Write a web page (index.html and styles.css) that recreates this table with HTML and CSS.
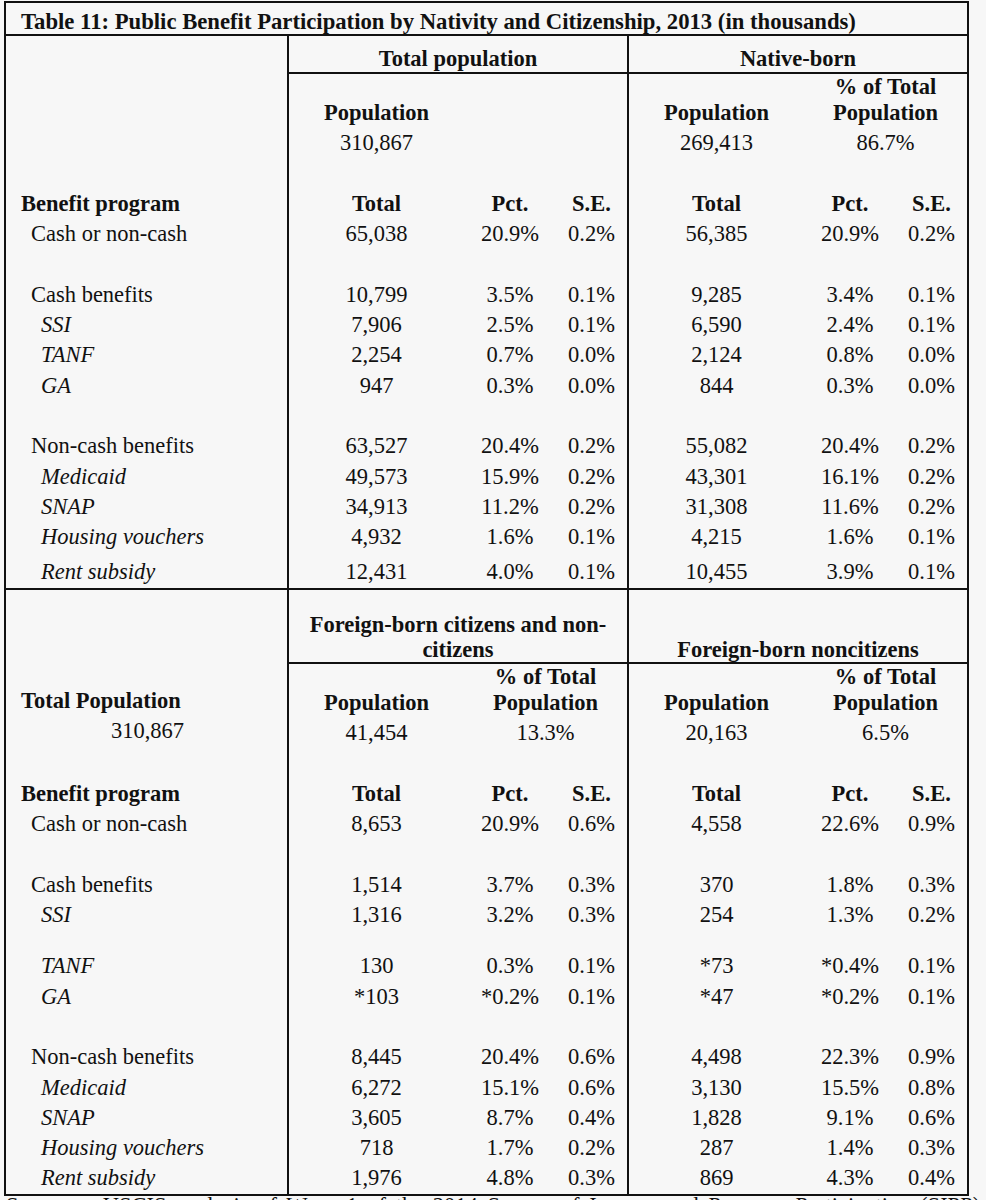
FILE: index.html
```html
<!DOCTYPE html>
<html lang="en">
<head>
<meta charset="utf-8">
<title>Table 11: Public Benefit Participation</title>
<link rel="stylesheet" href="styles.css">
</head>
<body>
<div class="page">
<table class="tbl">
<colgroup>
<col class="c-label"><col class="c-total"><col class="c-pct"><col class="c-se"><col class="c-total"><col class="c-pct"><col class="c-se">
</colgroup>
<tbody>
<tr><td colspan="7" class="title">Table 11: Public Benefit Participation by Nativity and Citizenship, 2013 (in thousands)</td></tr>

<tr>
  <td class="label-head" rowspan="2"></td>
  <td colspan="3" class="group d">Total population</td>
  <td colspan="3" class="group d">Native-born</td>
</tr>
<tr>
  <td class="pop d"><div class="hl">&nbsp;</div><div class="hl">Population</div><div class="vl">310,867</div></td>
  <td colspan="2" class="pop"></td>
  <td class="pop d"><div class="hl">&nbsp;</div><div class="hl">Population</div><div class="vl">269,413</div></td>
  <td colspan="2" class="pop"><div class="hl">% of Total</div><div class="hl">Population</div><div class="vl">86.7%</div></td>
</tr>

<tr class="hdr"><td class="l0">Benefit program</td><td class="d">Total</td><td>Pct.</td><td>S.E.</td><td class="d">Total</td><td>Pct.</td><td>S.E.</td></tr>
<tr><td class="l1">Cash or non-cash</td><td class="d">65,038</td><td>20.9%</td><td>0.2%</td><td class="d">56,385</td><td>20.9%</td><td>0.2%</td></tr>
<tr><td class="l1">&nbsp;</td><td class="d"></td><td></td><td></td><td class="d"></td><td></td><td></td></tr>
<tr><td class="l1">Cash benefits</td><td class="d">10,799</td><td>3.5%</td><td>0.1%</td><td class="d">9,285</td><td>3.4%</td><td>0.1%</td></tr>
<tr><td class="l2">SSI</td><td class="d">7,906</td><td>2.5%</td><td>0.1%</td><td class="d">6,590</td><td>2.4%</td><td>0.1%</td></tr>
<tr><td class="l2">TANF</td><td class="d">2,254</td><td>0.7%</td><td>0.0%</td><td class="d">2,124</td><td>0.8%</td><td>0.0%</td></tr>
<tr><td class="l2">GA</td><td class="d">947</td><td>0.3%</td><td>0.0%</td><td class="d">844</td><td>0.3%</td><td>0.0%</td></tr>
<tr><td class="l1">&nbsp;</td><td class="d"></td><td></td><td></td><td class="d"></td><td></td><td></td></tr>
<tr><td class="l1">Non-cash benefits</td><td class="d">63,527</td><td>20.4%</td><td>0.2%</td><td class="d">55,082</td><td>20.4%</td><td>0.2%</td></tr>
<tr><td class="l2">Medicaid</td><td class="d">49,573</td><td>15.9%</td><td>0.2%</td><td class="d">43,301</td><td>16.1%</td><td>0.2%</td></tr>
<tr><td class="l2">SNAP</td><td class="d">34,913</td><td>11.2%</td><td>0.2%</td><td class="d">31,308</td><td>11.6%</td><td>0.2%</td></tr>
<tr><td class="l2">Housing vouchers</td><td class="d">4,932</td><td>1.6%</td><td>0.1%</td><td class="d">4,215</td><td>1.6%</td><td>0.1%</td></tr>
<tr class="last-top"><td class="l2">Rent subsidy</td><td class="d">12,431</td><td>4.0%</td><td>0.1%</td><td class="d">10,455</td><td>3.9%</td><td>0.1%</td></tr>

<tr class="sec">
  <td class="label-head2" rowspan="2"><div class="hl">&nbsp;</div><div class="hl">Total Population</div><div class="vl tp"><span class="tp-box">310,867</span></div></td>
  <td colspan="3" class="group2 d">Foreign-born citizens and non-<br>citizens</td>
  <td colspan="3" class="group2 d">Foreign-born noncitizens</td>
</tr>
<tr>
  <td class="pop2 d"><div class="hl">&nbsp;</div><div class="hl">Population</div><div class="vl">41,454</div></td>
  <td colspan="2" class="pop2"><div class="hl">% of Total</div><div class="hl">Population</div><div class="vl">13.3%</div></td>
  <td class="pop2 d"><div class="hl">&nbsp;</div><div class="hl">Population</div><div class="vl">20,163</div></td>
  <td colspan="2" class="pop2"><div class="hl">% of Total</div><div class="hl">Population</div><div class="vl">6.5%</div></td>
</tr>

<tr class="hdr"><td class="l0">Benefit program</td><td class="d">Total</td><td>Pct.</td><td>S.E.</td><td class="d">Total</td><td>Pct.</td><td>S.E.</td></tr>
<tr><td class="l1">Cash or non-cash</td><td class="d">8,653</td><td>20.9%</td><td>0.6%</td><td class="d">4,558</td><td>22.6%</td><td>0.9%</td></tr>
<tr><td class="l1">&nbsp;</td><td class="d"></td><td></td><td></td><td class="d"></td><td></td><td></td></tr>
<tr><td class="l1">Cash benefits</td><td class="d">1,514</td><td>3.7%</td><td>0.3%</td><td class="d">370</td><td>1.8%</td><td>0.3%</td></tr>
<tr><td class="l2">SSI</td><td class="d">1,316</td><td>3.2%</td><td>0.3%</td><td class="d">254</td><td>1.3%</td><td>0.2%</td></tr>
<tr class="gap"><td class="l1"></td><td class="d"></td><td></td><td></td><td class="d"></td><td></td><td></td></tr>
<tr><td class="l2">TANF</td><td class="d">130</td><td>0.3%</td><td>0.1%</td><td class="d">*73</td><td>*0.4%</td><td>0.1%</td></tr>
<tr><td class="l2">GA</td><td class="d">*103</td><td>*0.2%</td><td>0.1%</td><td class="d">*47</td><td>*0.2%</td><td>0.1%</td></tr>
<tr><td class="l1">&nbsp;</td><td class="d"></td><td></td><td></td><td class="d"></td><td></td><td></td></tr>
<tr><td class="l1">Non-cash benefits</td><td class="d">8,445</td><td>20.4%</td><td>0.6%</td><td class="d">4,498</td><td>22.3%</td><td>0.9%</td></tr>
<tr><td class="l2">Medicaid</td><td class="d">6,272</td><td>15.1%</td><td>0.6%</td><td class="d">3,130</td><td>15.5%</td><td>0.8%</td></tr>
<tr><td class="l2">SNAP</td><td class="d">3,605</td><td>8.7%</td><td>0.4%</td><td class="d">1,828</td><td>9.1%</td><td>0.6%</td></tr>
<tr><td class="l2">Housing vouchers</td><td class="d">718</td><td>1.7%</td><td>0.2%</td><td class="d">287</td><td>1.4%</td><td>0.3%</td></tr>
<tr><td class="l2">Rent subsidy</td><td class="d">1,976</td><td>4.8%</td><td>0.3%</td><td class="d">869</td><td>4.3%</td><td>0.4%</td></tr>
</tbody>
</table>
<p class="source">Sources:&nbsp; USCIS analysis of Wave 1 of the 2014 Survey of Income and Program Participation (SIPP).</p>
</div>
</body>
</html>
```

FILE: styles.css
```css
html, body {
  margin: 0;
  padding: 0;
  background: #f7f7f7;
  overflow: hidden;
}

body {
  font-family: "Liberation Serif", "Times New Roman", serif;
  font-size: 22.5px;
  color: #111;
}

.page {
  padding: 1px 0 0 4px;
}

.tbl {
  border-collapse: collapse;
  table-layout: fixed;
  width: 965px;
  border: 2px solid #111;
}

.c-label { width: 283px; }
.c-total { width: 176px; }
.c-pct { width: 92px; }
.c-se { width: 72px; }

.tbl td {
  padding: 0;
  line-height: 30.3px;
  text-align: center;
  white-space: nowrap;
  vertical-align: top;
}

.tbl td.d {
  border-left: 2px solid #111;
}

.title {
  font-weight: bold;
  font-size: 22.7px;
  text-align: left !important;
  padding: 6px 0 0 15px !important;
  line-height: 25px !important;
  border-bottom: 2px solid #111;
}

.group {
  font-weight: bold;
  line-height: 26px !important;
  padding-top: 10px !important;
  vertical-align: bottom !important;
  border-bottom: 2px solid #111;
}

.pop, .pop2 {
  padding-bottom: 29px !important;
}

.hl {
  font-weight: bold;
  line-height: 26px;
}

.vl {
  line-height: 34px;
}

.hdr td {
  font-weight: bold;
}

.l0 {
  text-align: left !important;
  padding-left: 15px !important;
}

.l1 {
  text-align: left !important;
  padding-left: 25px !important;
}

.l2 {
  text-align: left !important;
  padding-left: 35px !important;
  font-style: italic;
}

.last-top td {
  padding-top: 4px;
  padding-bottom: 1px;
}

.sec td {
  border-top: 2px solid #111;
}

.group2 {
  font-weight: bold;
  line-height: 25px !important;
  padding-top: 22px !important;
  vertical-align: bottom !important;
  border-bottom: 2px solid #111;
}

.label-head2 {
  text-align: left !important;
  padding-left: 15px !important;
  padding-top: 72px !important;
}

.tp {
  text-align: left;
}

.tp-box {
  display: inline-block;
  width: 163px;
  text-align: right;
}

.gap td {
  height: 21px;
  line-height: 21px;
}

.source {
  margin: -1px 0 0;
  padding-left: 2px;
  line-height: 1;
  white-space: nowrap;
  word-spacing: 4px;
}
```
